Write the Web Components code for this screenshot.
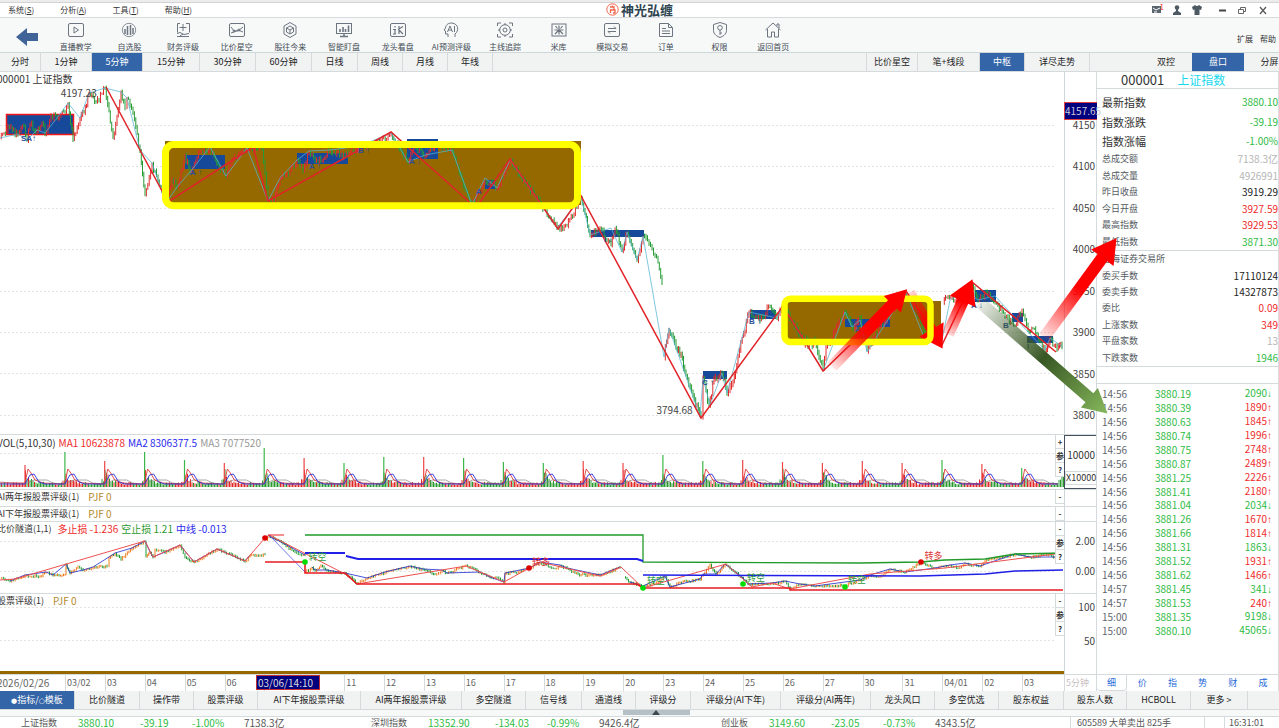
<!DOCTYPE html>
<html lang="zh-CN">
<head>
<meta charset="utf-8">
<title>神光弘缠</title>
<style>
  html, body { margin: 0; height: 100%; }
  body { font-family: "Noto Sans CJK SC", "Noto Sans", sans-serif; font-size: 10px; line-height: 12px; color: #333; background: #ececec; overflow: hidden; }
</style>
</head>
<body>
<trade-app></trade-app>
<script>
const BASE = `<style>
  *{box-sizing:border-box}
  :host{display:block;--line:#d5dadd;--blue:#3465a8;--up:#ee2b2b;--down:#2fbb45}
  button{font:inherit;line-height:inherit;color:inherit;background:none;border:0;margin:0;padding:0;white-space:nowrap}
  svg{display:block}
  .up{color:var(--up)} .down{color:var(--down)} .dim{color:#b5b5b5} .ink{color:#222}
</style>`;
function define(name, css, html, ready) {
  const t = document.createElement('template');
  t.innerHTML = BASE + `<style>${css}</style>` + (typeof html === 'string' ? html : '');
  customElements.define(name, class extends HTMLElement {
    constructor() {
      super();
      this.attachShadow({ mode: 'open' }).append(t.content.cloneNode(true));
    }
    connectedCallback() {
      if (this.done) return;
      this.done = true;
      if (ready) ready(this.shadowRoot, this);
    }
  });
}

/* ---------- icons (18 x 18 grid) ---------- */
const ICONS = {
  live: '<rect x="1.500" y="2.500" width="15" height="13" rx="1.500"/><path d="M7 6v6l4.500-3z"/>',
  self: '<circle cx="9" cy="9" r="6.700" stroke-width=".8"/><path d="M5 8v5M7.500 5v9M10.500 4v10M13 7v6" stroke-width="1.500"/>',
  fin: '<path d="M6 2.500H3.500v9M12 2.500h3.500v9M9 3v7M5.500 6.500h7M3 12.500l3-1 4 2 5-1M3 15.500h12M6 15l3-2"/>',
  star: '<rect x="1.500" y="2.500" width="15" height="13" rx="1.500"/><path d="M3 6l3 4 4 0 5-4M3 12l3-1 4-2 5 2"/><circle cx="6" cy="10" r="1"/><circle cx="11" cy="9" r="1"/>',
  cube: '<path d="M9 1.500l6 3.500v8l-6 3.500-6-3.500V5zM9 5l3.500 2v4L9 13l-3.500-2V7zM5.500 7L9 9l3.500-2M9 9v4"/>',
  monitor: '<rect x="1.500" y="2.500" width="15" height="10"/><path d="M5 11V8M8 11V6M10.500 11V8M13.500 11V4.500" stroke-width="1.600"/><path d="M9 13v2.500M5 15.500h8" stroke-width="1.500"/>',
  dragon: '<rect x="1.500" y="2.500" width="15" height="13" rx="1.500"/><path d="M6 5v1.500M6 8v5M4 8.500h3M4 13h3M10 5v8M9 8.500l5-3M10 9l4 4" stroke-width="1.200"/>',
  ai: '<path d="M6 16v-3H3.500v-3L2 9l1.500-2C4 3 7 2 10 2c7 1 7 8 3 11v3"/><path d="M5.500 11L8 5l2.500 6M6.500 9h3M12.500 5v6"/>',
  target: '<circle cx="9" cy="9" r="5.300"/><circle cx="9" cy="9" r="2"/><path d="M1.500 5V2H5M13 2h3.500v3M1.500 13v3H5M13 16h3.500v-3M9 2v2M9 14v2M2 9h2M14 9h2"/>',
  rice: '<rect x="2" y="3" width="14" height="12"/><path d="M9 4.500v9M4.500 9h9M5.500 5l2 2.500M12.500 5l-2 2.500M9 9l-4 4M9 9l4 4" stroke-width="1.200"/>',
  swap: '<rect x="1.500" y="2.500" width="15" height="13" rx="1.500"/><path d="M5 7.500h8L11 5.500M13 10.500H5l2 2"/>',
  order: '<path d="M2.500 2.500h9l4 4v9h-13zM11.500 2.500v4h4M5 7.500h4M5 10h8M5 12.500h8"/>',
  shield: '<path d="M9 1.500l6.500 2v6c0 4-4 6-6.500 7-2.500-1-6.500-3-6.500-7v-6z"/><circle cx="9" cy="6.800" r="2.300"/><path d="M9 9v5M9 12h2"/>',
  home: '<path d="M1.500 9L9 2l7.500 7M3.500 8v8h4v-5h3v5h4V8M13 5V3h2v4"/>'
};

/* ---------- menu bar ---------- */
define('menu-bar', `
  :host{display:grid;grid-template-columns:1fr auto 1fr;align-items:center;height:16px;padding-bottom:3px;background:#fff;border-bottom:1px solid var(--line);font-size:8px;border-top:1px solid #d4d4d4}
  nav{display:flex;padding-left:8px;gap:26px;line-height:10px}
  .logo{display:flex;gap:2px;align-items:center;font-size:13px;font-weight:700;line-height:12px;color:#2e4450}
  .win{display:flex;justify-content:flex-end;gap:8px;padding-right:10px}
  .win button{width:12px;height:12px;position:relative}
  .win button:nth-child(3){margin-right:6px}
  .win b{position:absolute;right:-1px;top:-1px;color:#e33;font-size:8px;line-height:8px;font-weight:400}
  u{text-underline-offset:1px}
`, `<nav><button>系统(<u>S</u>)</button><button>分析(<u>A</u>)</button><button>工具(<u>T</u>)</button><button>帮助(<u>H</u>)</button></nav>
<div class="logo"><svg width="13" height="13" viewBox="0 0 13 13" fill="none" stroke="#f0644c"><circle cx="6.500" cy="6.500" r="5.700"/><path d="M4 4h4v3H4.500v3M6 7h3v3H7M6.500 2.500V4" stroke-width="1.300"/></svg><span>神光弘缠</span></div>
<div class="win">
<button aria-label="消息"><svg width="12" height="12" viewBox="0 0 12 12"><path d="M1 2h9v7H1z" fill="#5a6670"/><path d="M2 4l3 2 4-2M3 8h3" stroke="#fff" fill="none"/></svg><b>1</b></button>
<button aria-label="用户"><svg width="12" height="12" viewBox="0 0 12 12" fill="#4d5963"><circle cx="6" cy="3.500" r="2.300"/><path d="M5 5h2v2l3 2v2H2V9l3-2z"/></svg></button>
<button aria-label="皮肤"><svg width="12" height="12" viewBox="0 0 12 12" fill="#4d5963"><path d="M1 3l3-2q2 2 4 0l3 2-1 3-1.500-.5V11h-5V5.500L2 6z"/></svg></button>
<button aria-label="最小化"><svg width="12" height="12"><path d="M2 6.500h7" stroke="#444" stroke-width="2"/></svg></button>
<button aria-label="还原"><svg width="12" height="12" fill="none" stroke="#666"><path d="M1.500 5.500h5v4h-5zM3.500 5V3.500h5v4H7"/></svg></button>
<button aria-label="关闭"><svg width="12" height="12"><path d="M3 3l6 7M9 3l-6 7" stroke="#555" stroke-width="1.200"/></svg></button></div>`);

/* ---------- tool bar ---------- */
define('tool-item', `
  :host{display:block}
  button{width:100%;display:flex;flex-direction:column;align-items:center;gap:3px;font-size:8px;line-height:10px;color:#444c55}
  svg{fill:none;stroke:#6d7580;stroke-width:1}
`, `<button><svg width="18" height="18" viewBox="0 0 18 18"></svg><slot></slot></button>`,
 (r, h) => { r.querySelector('svg').innerHTML = ICONS[h.getAttribute('icon')]; });

define('tool-bar', `
  :host{display:flex;height:35px;background:#f7f9f9;border-bottom:1px solid #cfd8d8}
  .back{width:49px;display:grid;place-items:center;padding:3px 0 0 4px}
  .items{display:grid;grid-template-columns:repeat(14,1fr);width:751px;padding-top:3px}
  .more{margin-left:auto;display:flex;gap:7px;padding:16px 3px 0 0;font-size:8px;line-height:10px;align-items:flex-start}
`, `<button class="back" aria-label="返回"><svg width="22" height="18" viewBox="0 0 22 18"><path d="M0 9L11 0v5h11v8H11v5z" fill="#416498"/></svg></button>
<div class="items">${[['live','直播教学'],['self','自选股'],['fin','财务评级'],['star','比价星空'],['cube','股往今来'],['monitor','智能盯盘'],['dragon','龙头看盘'],['ai','AI预测评级'],['target','主线追踪'],['rice','米库'],['swap','模拟交易'],['order','订单'],['shield','权限'],['home','返回首页']].map(([i, t]) => `<tool-item icon="${i}">${t}</tool-item>`).join('')}</div>
<div class="more"><button>扩展</button><button>帮助</button></div>`);

/* ---------- tab strips ---------- */
const tabs = (list) => list.map(([t, w, on]) => `<button style="width:${w}px"${on ? ' class="on"' : ''}>${t}</button>`).join('');
const TABCSS = `
  button{height:100%;flex:none;border-right:1px solid var(--line);font-size:9px;color:#222}
  .on{background:var(--blue);color:#fff}`;
define('period-tabs', `
  :host{display:flex;height:19px;background:#f1f3f3;border-bottom:1px solid var(--line);overflow:hidden}
  .g{display:flex}.r{margin-left:auto;border-left:1px solid var(--line)}
  .side{width:189px;justify-content:flex-start;padding-left:50px}.side button{border:0}
  ${TABCSS}`,
  `<div class="g">${tabs([['分时',41],['1分钟',51],['5分钟',51,1],['15分钟',57],['30分钟',56],['60分钟',56],['日线',46],['周线',45],['月线',45],['年线',45]])}</div>
   <div class="g r">${tabs([['比价星空',51],['笔+线段',62],['中枢',45,1],['详尽走势',65]])}</div>
   <div class="g side">${tabs([['双控',52],['盘口',52,1],['分屏',51]])}</div>`);
define('template-tabs', `
  :host{display:flex;height:18px;background:#f1f3f3;overflow:hidden}${TABCSS}
  i{font:normal 7px/9px "DejaVu Sans",sans-serif}`,
  tabs([['<i>●</i>指标/<i>○</i>模板',75,1],['比价隧道',65],['操作带',54],['股票评级',64],['AI下年报股票评级',103],['AI两年报股票评级',101],['多空隧道',64],['信号线',56],['通道线',54],['评级分',55],['评级分(AI下年)',90],['评级分(AI两年)',90],['龙头风口',64],['多空优选',64],['股东权益',65],['股东人数',63],['HCBOLL',64],['更多 &gt;',57]]));

/* ---------- chart frame ---------- */
define('chart-pane', `
  :host{display:grid;grid-template-columns:minmax(0,1fr) 33px;border-bottom:1px solid var(--line);background:#fff}
  .plot{position:relative;overflow:hidden;min-height:0}
  .head{display:flex;gap:3px;margin-left:-3px;white-space:nowrap;position:relative;color:#333;height:12px}
  .art{position:absolute;inset:0}
  .tools{position:absolute;right:0;top:0;width:9px;font-size:8px;line-height:12px;font-weight:700;background:#fff}
  .tools button{display:block;width:9px;height:14px;border:1px solid var(--line);border-width:0 0 1px 1px;color:#333}
  .axis{border-left:1px solid #cdd7d9;border-right:1px solid var(--line);position:relative;min-height:0}
`, `<div class="plot"><div class="art"><slot></slot></div><div class="head"><slot name="title"></slot></div><div class="tools"></div></div><div class="axis"><slot name="axis"></slot></div>`,
 (r, h) => {
  r.querySelector('.head').style.marginTop = (h.getAttribute('inset') || 1) + 'px';
  const t = h.getAttribute('tools') || '';
  r.querySelector('.tools').innerHTML = [...t].map(c => `<button>${c}</button>`).join('');
 });
define('axis-scale', `
  :host{display:flex;flex-direction:column;justify-content:space-between;text-align:right;color:#444;padding-right:1px}
`, '<slot></slot>');

/* ---------- drawing helpers ---------- */
function rng(seed) { return () => (seed = (seed * 16807) % 2147483647) / 2147483647; }
function candles(pts, seed, amp, step) {
  const rnd = rng(seed), d = ['', ''];
  let px = pts[0][1];
  for (let i = 1; i < pts.length; i++) {
    const [x0, y0] = pts[i - 1], [x1, y1] = pts[i];
    const n = Math.max(1, Math.round((x1 - x0) / step));
    for (let k = 1; k <= n; k++) {
      const x = x0 + (x1 - x0) * k / n;
      const y = y0 + (y1 - y0) * k / n + (k < n ? (rnd() - .5) * amp : 0);
      const c = y < px ? 0 : 1;
      d[c] += `M${x.toFixed(1)} ${(Math.min(px, y) - rnd() * amp * .4).toFixed(1)}V${(Math.max(px, y) + 1 + rnd() * amp * .4).toFixed(1)}`;
      px = y;
    }
  }
  return `<path d="${d[0]}" stroke="#e02c2c" fill="none"/><path d="${d[1]}" stroke="#269a35" fill="none"/>`;
}
const line = (pts, c, w = 1, o = 1) => `<polyline points="${pts.map(p => p.join()).join(' ')}" fill="none" stroke="${c}" stroke-width="${w}" opacity="${o}"/>`;
const grid = ys => ys.map(y => `<path d="M0 ${y}.5H1055" stroke="#e3e3e3" stroke-dasharray="2 2"/>`).join('');
const svg = (y, h, body) => `<svg width="100%" height="${h}" viewBox="0 ${y} 1064 ${h}" preserveAspectRatio="none">${body}</svg>`;

/* ---------- price ---------- */
const P1 = [[0,138],[8,126],[18,134],[24,126],[27,140],[30,124],[37,130],[42,123],[45,133],[51,115],[57,118],[65,112],[68,103],[73,139],[80,118],[84,112],[89,93],[96,102],[105,88],[113,138],[121,92],[125,108],[127,98],[133,112],[140,150],[145,194],[152,163],[158,180],[166,203],[172,178],[177,187],[185,155],[190,172],[200,152],[210,147],[218,165],[226,176],[232,160],[247,148],[262,149],[268,201],[274,200],[280,178],[290,170],[297,160],[303,170],[309,151],[318,162],[330,150],[345,155],[360,146],[375,145],[391,133],[398,147],[408,162],[415,145],[425,155],[440,145],[452,150],[462,180],[472,205],[485,180],[497,188],[510,160],[525,182],[540,202],[557,228],[567,225],[581,197],[585,213],[590,235],[600,227],[611,245],[615,228],[622,250],[627,232],[637,260],[643,236],[652,248],[658,262],[662,284]];
const P2 = [[664,357],[669,330],[676,348],[681,354],[686,375],[693,395],[701,416],[703,378],[709,405],[714,378],[722,373],[727,393],[733,380],[738,355],[745,330],[749,312],[760,320],[770,307],[777,318],[783,307],[790,320],[800,335],[808,345],[815,340],[823,368],[826,345],[835,330],[845,313],[852,327],[860,318],[867,350],[880,325],[890,312],[905,292],[915,310],[922,325],[925,338]];
const P3 = [[943,302],[948,296],[955,300],[962,290],[972,284],[978,300],[986,292],[995,302],[1005,316],[1015,325],[1022,309],[1028,330],[1033,328],[1045,350],[1050,338],[1057,349],[1062,346]];
const STROKE = [[106,87],[168,202],[253,147],[268,201],[391,132],[476,208],[510,159],[558,229],[581,196],[701,418],[783,306],[823,371],[906,291],[942,345],[972,282],[1056,352]];
const zig = (pts, n) => pts.filter((p, i) => i % n === 0);
define('price-chart', `
  :host{position:relative}
  .t{position:absolute;color:#444;line-height:12px}
`, svg(72, 362, grid([125,166,208,249,291,332,373,415]) +
  '<path d="M165 141h416v64H165zM786 301h155v38H786z" fill="#966900"/>' +
  '<rect x="6.500" y="114.500" width="67" height="20" fill="#17499b" stroke="#f01818" stroke-width="1.500"/>' +
  '<path fill="#17499b" d="M185 155h40v14h-40zM297 153h51v11h-51zM358 145h26v3h-26zM407 139h31v20h-31zM485 180h10v9h-10zM591 230h53v7h-53zM703 371h24v8h-24zM750 310h26v9h-26zM845 319h45v8h-45zM975 290h21v12h-21zM1012 313h11v9h-11zM1027 336h26v7h-26z"/>' +
  candles(P1, 77, 6, 1.4) + candles(P2, 5, 8, 1.4) + candles(P3, 9, 6, 1.4) +
  line(zig(P1.slice(0, 60), 2).concat([[472,205],[485,178],[497,188],[510,160],[557,228],[581,197],[590,235],[611,228],[622,252],[627,232],[637,260],[643,236],[664,357],[669,328],[700,417],[703,378],[710,405],[722,373],[727,393],[749,312],[777,318],[783,306],[823,371],[845,312],[852,327],[860,320],[867,352],[906,292],[925,340]]), '#56b4d4', 1, .75) +
  line([[942,340],[950,300],[965,290],[978,300],[995,296],[1028,332],[1045,350],[1050,338],[1063,347]], '#56b4d4', 1, .75) +
  line(STROKE, '#e0242a', 1.5)) +
  `<span class="t" style="left:5.700%;top:15px">4197.23</span><span class="t" style="left:61.700%;top:332px">3794.68</span>`,
  r => {
    const marks = [[21,134,'SA↑'],[190,168,'A ↑'],[309,162,'A ↑'],[358,146,'B ↑'],[409,157,'A ↓'],[476,187,'A'],[604,235,'I ↓'],[702,378,'C ↑'],[749,317,'B ↑'],[855,325,'A'],[971,301,'A ↓'],[1003,321,'B'],[1027,342,'I']];
    const st = document.createElement('style');
    st.textContent = '.m{position:absolute;font:bold 8px/10px "Liberation Sans","DejaVu Sans",sans-serif;color:#2c4f9a;white-space:nowrap}';
    r.append(st);
    for (const [x, y, t] of marks) {
      const s = document.createElement('span');
      s.className = 'm'; s.textContent = t;
      s.style.left = (x / 10.64) + '%'; s.style.top = (y - 72) + 'px';
      r.append(s);
    }
  });

/* ---------- volume ---------- */
function volume() {
  const tops = [465,452,461,452,460,463,448,458,463,457,457,458,462,463,461,463,455,461,460,462,463,461,463,460,464,468];
  const col = 'rgrggrgrggrgggrrggrrrrrgrg';
  const rnd = rng(31), d = { r: '', g: '' };
  let out = '';
  for (let x = 0; x < 1064; x += 1.5) {
    const i = Math.floor((x - 25) / 39.87), t = i < 0 ? 30 : x - 25 - i * 39.87;
    const h = 2 + 15 * Math.exp(-t / 5) * (.5 + rnd() * .6) + rnd() * 3 + (t > 37 ? 3 : 0);
    const r = Math.sin(x / 9) + rnd() * 2 > 1 ? 'r' : 'g';
    d[r] += `M${x.toFixed(1)} 487V${(487 - h).toFixed(1)}`;
  }
  out += `<path d="${d.g}" stroke="#2a9a30" stroke-width="1"/><path d="${d.r}" stroke="#e02828" stroke-width="1"/>`;
  const a = [[0,483]], b = [[0,484]], c = [[0,482]];
  tops.forEach((t, i) => {
    const x = 25 + i * 39.87;
    out += `<path d="M${x.toFixed(1)} 487V${t}" stroke="${col[i] === 'r' ? '#ee4545' : '#3cb84a'}" stroke-width="1.200"/>`;
    a.push([x, 483], [x + 3, 469], [x + 6, 473], [x + 10, 480], [x + 18, 483], [x + 36, 484]);
    b.push([x, 484], [x + 5, 475], [x + 9, 474], [x + 14, 482], [x + 20, 484], [x + 36, 484]);
    c.push([x, 484], [x + 9, 480], [x + 22, 480], [x + 28, 483], [x + 36, 484]);
  });
  return out + line(c, '#888', 1, .7) + line(a, '#e03a3a', 1, .9) + line(b, '#2b32d8', 1, .9);
}
define('volume-chart', '', svg(435, 53, grid([453]) + volume()));

/* ---------- tunnel ---------- */
const T = [
 [[0,578],[10,581],[25,575],[40,576],[46,572],[53,575],[65,574],[66,564],[70,573],[78,566],[83,570],[93,567],[107,566],[109,557],[115,553],[121,559],[132,548],[145,541],[146,556],[150,552],[153,557],[155,549],[165,552],[180,545],[185,557],[194,562],[217,549],[228,553],[245,561],[250,555],[265,554]],
 [[266,540],[269,536],[283,543],[295,552],[305,555]],
 [[305,572],[312,567],[315,570],[321,565],[327,570],[345,573],[357,583],[367,578],[385,572],[400,568],[410,566],[423,569],[435,574],[442,570],[447,573],[466,565],[480,572],[490,577],[497,577],[504,582],[505,573],[515,572],[530,568],[540,562],[555,568],[560,565],[567,568],[578,574],[600,575],[620,567]],
 [[624,577],[630,582],[643,586],[655,583],[665,576],[670,587],[680,582],[700,579],[703,574],[710,564],[716,574],[725,564],[735,572],[742,577],[748,584],[760,583],[772,583],[785,581],[790,588],[800,584],[815,586],[845,585],[860,580],[870,575],[880,576],[890,569],[905,572],[921,562],[935,568],[950,565],[958,568],[965,563],[980,566],[985,560],[1015,554],[1030,557],[1045,554],[1055,557],[1062,552]]];
const dot = (x, y, c) => `<circle cx="${x}" cy="${y}" r="2.800" fill="${c}"/>`;
define('tunnel-chart', `
  :host{position:relative}
  .s{position:absolute;font-size:9px;line-height:12px}
`, svg(522, 70, grid([541,571]) +
  T.map((p, i) => candles(p, 11 + i, 2, 1.6).replace('#e02c2c', '#ef7a1a') + line(p.filter((q, k) => k % 3), '#1c2acb', 1, .8)).join('') +
  line([[0,580],[15,579],[145,541],[153,557],[180,545],[194,562],[217,549],[245,561],[265,538],[269,535],[345,574],[357,584],[466,566],[504,582],[540,562],[600,576],[621,567],[643,588],[726,564],[752,587],[772,583],[790,589],[870,574],[945,568],[1063,553]], '#ee5050', 1) +
  line([[269,535],[305,572]], '#5555ee', 1, .8) + line([[268,535],[284,535]], '#e22', 1) +
  line([[305,535],[643,535],[643,562],[860,563],[920,562],[945,560],[985,559],[1015,554],[1063,553]], '#219a2a', 1.3) +
  line([[305,553],[345,553]], '#2020e8', 2) + line([[346,556],[358,559],[637,559],[643,561]], '#2020e8', 2) +
  line([[643,575],[920,576],[985,574],[1015,571],[1063,570]], '#2020e8', 1.5) +
  line([[265,562],[305,562],[305,573],[345,573],[357,584],[637,584],[643,588],[790,588],[790,590],[1063,590]], '#e81c24', 1.6) +
  dot(265,538,'#d00') + dot(529,568,'#d00') + dot(921,562,'#d00') + dot(305,562,'#0d0') + dot(643,588,'#0d0') + dot(743,584,'#0d0') + dot(845,587,'#0d0')) +
  [[309,551,'转空','#2d9a40'],[532,556,'转多','#d33'],[647,575,'转空','#2d9a40'],[747,572,'转空','#2d9a40'],[848,574,'转空','#2d9a40'],[925,550,'转多','#d33']].map(([x, y, t, c]) => `<span class="s" style="left:${(x / 10.64).toFixed(1)}%;top:${y - 522}px;color:${c}">${t}</span>`).join(''));

define('rating-chart', '', svg(593, 80, grid([606,639]) + '<path d="M0 671.500H1064" stroke="#966900" stroke-width="3"/>'));

/* ---------- time axis ---------- */
define('time-axis', `
  :host{display:grid;grid-template-columns:minmax(0,1fr) 33px;height:17px;background:#fff;border-top:1px solid var(--line)}
  ol{list-style:none;margin:0;padding:0 2px 0 0;display:grid;grid-template-columns:65px repeat(25,1fr);position:relative;font-size:9px;line-height:15px;color:#666;white-space:nowrap;overflow:hidden}
  li{padding-left:1px;min-width:0;border-left:1px solid var(--line)}
  li:first-child{margin-left:-3px;padding:0;border:0;font-size:10px}
  mark{position:absolute;left:256px;top:0;width:64px;height:15px;background:#00007f;border:1px solid #c03030;color:#ddd;font-size:10px;line-height:13px;padding-left:1px}
  span{color:#c9bfc2;font-size:9px;line-height:15px;padding-left:1px;border:1px solid var(--line);border-width:0 1px;white-space:nowrap}
`, `<ol>${'2026/02/26,03/02,03,04,05,06,,,11,12,13,16,17,18,19,20,23,24,25,26,27,30,31,04/01,02,03'.split(',').map(t => `<li>${t}</li>`).join('')}<mark>03/06/14:10</mark></ol><span>5分钟</span>`);

/* ---------- quote panel ---------- */
const q = rows => rows.map(([k, v, c]) => `<tr><th scope="row">${k}</th><td class="${c || ''}">${v}</td></tr>`).join('');
const tape = '2090↓3880.19,1890↑3880.39,1845↑3880.63,1996↑3880.74,2748↑3880.75,2489↑3880.87,2226↑3881.25,2180↑3881.41,2034↓3881.04,1670↑3881.26,1814↑3881.66,1863↓3881.31,1931↑3881.52,1466↑3881.62,341↓3881.45,240↑3881.53,9198↓3881.35,45065↓3880.10'.split(',')
  .map((s, i) => { const [, v, a, p] = s.match(/(\d+)([↑↓])(.+)/); const t = i < 14 ? '14:56' : i < 16 ? '14:57' : '15:00';
    return `<tr><td>${t}</td><td class="down">${p}</td><td class="${a === '↑' ? 'up' : 'down'}">${v}<i>${a}</i></td></tr>`; }).join('');
define('quote-panel', `
  :host{display:flex;flex-direction:column;width:182px;background:#fff;border-right:1px solid #ddd}
  h2{margin:0;height:17px;display:flex;gap:13px;border-bottom:1px solid var(--line);font-size:13px;font-weight:400;line-height:16px;padding-left:24px;color:#333}
  h2 b{font-weight:400;font-size:12px;color:#19d8ee}
  table{border-collapse:collapse;width:100%;flex:none}
  th{font-weight:400;text-align:left;padding:0 0 0 5px;color:#555b62;font-size:9px;line-height:12px}
  td{padding:0;line-height:12px}
  .q td{text-align:right}
  .big{height:62px;border-top:3px solid transparent}
  .big th{font-size:11px;color:#333}
  .a{height:99px}.b{height:117px}
  .b{border-top:1px solid var(--line);border-bottom:1px solid var(--line)}
  .gap{height:17px;border-bottom:1px solid var(--line);flex:none}
  .tape{height:251px;margin-top:3px}
  .tape td:first-child{padding-left:5px;width:58px;color:#60666c}
  .tape td:last-child{text-align:right;padding-right:6px}
  i{font:normal 10px/12px "Liberation Sans",sans-serif;font-weight:700}
  nav{margin-top:auto;height:17px;border-top:1px solid var(--line);display:grid;grid-template-columns:repeat(6,1fr);font-size:9px;color:#1f68d8}
  nav button:first-child{border-right:1px solid var(--line);border-bottom:1px solid var(--line);border-radius:0 0 4px 4px}
`, `<h2><span>000001</span><b>上证指数</b></h2>
<table class="q big">${q([['最新指数','3880.10','down'],['指数涨跌','-39.19','down'],['指数涨幅','-1.00%','down']])}</table>
<table class="q a">${q([['总成交额','7138.3亿','dim'],['总成交量','4926991','dim'],['昨日收盘','3919.29','ink'],['今日开盘','3927.59','up'],['最高指数','3929.53','up'],['最低指数','3871.30','down']])}</table>
<table class="q b"><tr><th colspan="2">上海证券交易所</th></tr>${q([['委买手数','17110124','ink'],['委卖手数','14327873','ink'],['委比','0.09','up'],['上涨家数','349','up'],['平盘家数','13','dim'],['下跌家数','1946','down']])}</table>
<div class="gap"></div><table class="tape">${tape}</table>
<nav><button>细</button><button>价</button><button>指</button><button>势</button><button>财</button><button>成</button></nav>`);

/* ---------- arrows and boxes drawn over the workspace ---------- */
function arrow(id, x0, y0, x1, y1, w, hw, hl, stops) {
  const L = Math.hypot(x1 - x0, y1 - y0), ux = (x1 - x0) / L, uy = (y1 - y0) / L;
  const bx = x1 - ux * hl, by = y1 - uy * hl, p = (x, y, k) => `${(x - uy * k).toFixed(1)} ${(y + ux * k).toFixed(1)}`;
  return `<linearGradient id="${id}" gradientUnits="userSpaceOnUse" x1="${x0}" y1="${y0}" x2="${x1}" y2="${y1}">${stops}</linearGradient>
  <path fill="url(#${id})" d="M${p(x0, y0, w)}L${p(bx, by, w)}L${p(bx, by, hw)}L${x1} ${y1}L${p(bx, by, -hw)}L${p(bx, by, -w)}L${p(x0, y0, -w)}z"/>`;
}
const RED = '<stop offset="0" stop-color="#f00" stop-opacity=".1"/><stop offset=".5" stop-color="#f00"/>';
const RED2 = '<stop offset="0" stop-color="#f00" stop-opacity=".15"/><stop offset=".6" stop-color="#f00"/>';
const GRN = '<stop offset="0" stop-color="#385723" stop-opacity=".1"/><stop offset=".5" stop-color="#385723"/><stop offset="1" stop-color="#86b85c"/>';
define('mark-layer', `
  :host{position:absolute;inset:0;pointer-events:none}svg{width:100%;height:100%}
`, `<svg viewBox="0 72 1279 618" preserveAspectRatio="none">
 <rect x="165.500" y="144.500" width="412" height="61" rx="8" fill="none" stroke="#ff0" stroke-width="7"/>
 ${arrow('g2', 910, 292, 942.500, 348, 5, 14, 22, RED2)}
 <rect x="784.500" y="298.500" width="146" height="43" rx="6" fill="none" stroke="#ff0" stroke-width="6.500"/>
 ${arrow('g1', 832, 366, 907, 289, 6, 12, 21, RED)}
 ${arrow('g3', 948, 334, 972.500, 279, 6, 14, 24, RED2)}
 ${arrow('g4', 1044, 337, 1116.500, 238, 6, 14, 24, RED)}
 ${arrow('g5', 980, 302, 1107.500, 413, 6, 13, 24, GRN)}
</svg>`);

/* ---------- status bar ---------- */
define('status-bar', `
  :host{display:flex;height:12px;background:#fff;color:#555;font-size:10px;line-height:11px;border-top:1px solid var(--line);white-space:nowrap}
  .g{display:grid}.g>*:first-child{font-size:9px}
  .l{display:flex;flex:1;padding-left:21px;min-width:0}
  .c{border-left:1px solid var(--line);padding-left:6px;font-size:9px}
`, `<div class="l">
<div class="g" style="grid-template-columns:57px 62px 52px 52px 127px"><span>上证指数</span><span class="down">3880.10</span><span class="down">-39.19</span><span class="down">-1.00%</span><span>7138.3亿</span></div>
<div class="g" style="grid-template-columns:57px 67px 52px 52px 122px"><span>深圳指数</span><span class="down">13352.90</span><span class="down">-134.03</span><span class="down">-0.99%</span><span>9426.4亿</span></div>
<div class="g" style="grid-template-columns:48px 62px 52px 52px auto"><span>创业板</span><span class="down">3149.60</span><span class="down">-23.05</span><span class="down">-0.73%</span><span>4343.5亿</span></div></div>
<div class="c" style="width:134px">605589 大单卖出 825手</div><div class="c" style="width:20px"></div><time class="c" style="width:55px;padding-left:4px">16:31:01</time>`);

define('scroll-strip', `
  :host{display:block;height:7px;background:#f7f9f9;border-top:1px solid var(--line);padding-left:48.700%}
  div{width:67px;height:5px;background:#b5bfc6;display:grid;place-items:center}
`, '<div><svg width="8" height="5"><path d="M0 5l4-5 4 5z" fill="#3c474f"/></svg></div>');

/* ---------- application ---------- */
define('trade-app', `
  :host{display:flex;flex-direction:column;min-height:100vh;padding-top:2px;overflow:hidden}
  main{display:flex;position:relative}
  .charts{flex:1;min-width:0}
  .main{height:363px}.vol{height:55px}.s1{height:17px}.s2{height:15px}.tun{height:72px}.rate{height:80px;border:0}
  .main axis-scale{margin-top:47px;height:302px}
  .tun axis-scale{margin-top:13px;height:42px}
  .rate axis-scale{margin-top:7px;height:46px}
  .hot{position:absolute;left:-1px;top:30px;width:33px;height:18px;border:1px solid #e04040;border-right:0;background:#00007f;color:#ccd;line-height:16px;text-align:right}
  .vbox{display:block;height:54px;border:1px solid #46505e;border-right:0;margin-left:-1px;padding-top:13px;text-align:right}
  .vbox span{display:block;padding-right:1px}
  .vbox span+span{border:1px solid var(--line);border-right:0;padding:0;margin-top:10px;white-space:nowrap;font-size:9px;text-align:left}
  .gold{color:#b5892c;padding-left:6px}.up{padding-left:3px}.b{color:#2a2af0}.g{color:#999}.gr{color:#2d9a2d}
  .sm{font-size:9px}
`, `<menu-bar></menu-bar><tool-bar></tool-bar><period-tabs></period-tabs>
<main><div class="charts">
<chart-pane class="main"><span slot="title">000001 上证指数</span><price-chart></price-chart>
 <axis-scale slot="axis">${[4150,4100,4050,4000,3950,3900,3850,3800].map(v => `<span>${v}</span>`).join('')}</axis-scale><span slot="axis" class="hot">4157.65</span></chart-pane>
<chart-pane class="vol" tools="+参?" inset="2"><span slot="title">VOL(5,10,30)</span><span slot="title" class="m1" style="color:#ee2b2b">MA1 10623878</span><span slot="title" class="b">MA2 8306377.5</span><span slot="title" class="g">MA3 7077520</span><volume-chart></volume-chart><div slot="axis" class="vbox"><span>10000</span><span>X10000</span></div></chart-pane>
<chart-pane class="s1" tools="-"><span slot="title" class="sm">AI两年报股票评级(1)</span><span slot="title" class="gold">PJF 0</span></chart-pane>
<chart-pane class="s2" tools="-"><span slot="title" class="sm">AI下年报股票评级(1)</span><span slot="title" class="gold">PJF 0</span></chart-pane>
<chart-pane class="tun" tools="-参?"><span slot="title" class="sm">比价隧道(1,1)</span><span slot="title" class="up">多止损 -1.236</span><span slot="title" class="gr">空止损 1.21</span><span slot="title" class="b">中线 -0.013</span><tunnel-chart></tunnel-chart><axis-scale slot="axis"><span>2.00</span><span>0.00</span></axis-scale></chart-pane>
<chart-pane class="rate" tools="-参?"><span slot="title" class="sm">股票评级(1)</span><span slot="title" class="gold">PJF 0</span><rating-chart></rating-chart><axis-scale slot="axis"><span>100</span><span>50</span></axis-scale></chart-pane>
<time-axis></time-axis></div>
<quote-panel></quote-panel><mark-layer></mark-layer></main>
<template-tabs></template-tabs><scroll-strip></scroll-strip><status-bar></status-bar>`);
</script>
</body>
</html>
